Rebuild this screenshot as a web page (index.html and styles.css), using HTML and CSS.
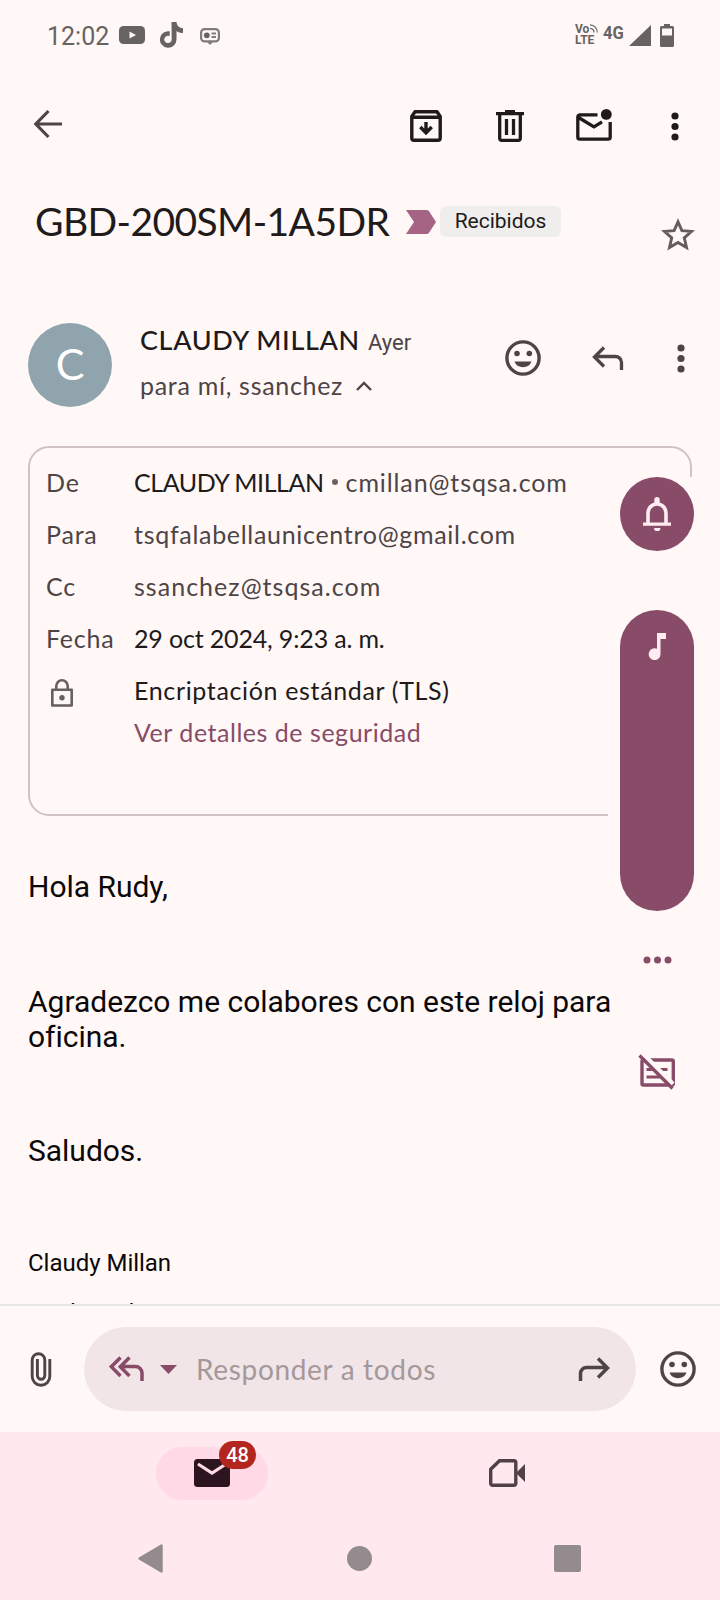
FILE: index.html
```
<!DOCTYPE html>
<html lang="es">
<head>
<meta charset="utf-8">
<title>GBD-200SM-1A5DR</title>
<link rel="stylesheet" href="styles.css">
</head>
<body>
<div class="phone">
  <header class="status">
    <span class="clock">12:02</span>
    <svg class="i-yt" width="26" height="18" viewBox="0 0 26 18"><rect width="26" height="18" rx="4.5" fill="#686363"/><path d="M10.500 5.500v7l6.500-3.500z" fill="#fff8f7"/></svg>
    <svg class="i-tt" width="23" height="26" viewBox="0 0 23 26"><path d="M11.500 0h5c.3 3.600 2.700 6 6.500 6.300v4.600c-2.400 0-4.600-.6-6.500-2V17.500A8.300 8.300 0 1 1 9.700 9.300v4.800a3.700 3.700 0 1 0 2 3.400z" fill="#686363"/></svg>
    <svg class="i-card" width="20" height="17" viewBox="0 0 20 17"><rect x="1.100" y="1.100" width="17.800" height="12.300" rx="3.500" fill="none" stroke="#817c7b" stroke-width="2.200"/><path d="M6.500 13.500h7L10 17z" fill="#817c7b"/><circle cx="6.800" cy="7.300" r="2.900" fill="#686363"/><path d="M11.500 5.500h4.500M11.500 9h4.500" stroke="#817c7b" stroke-width="1.800"/></svg>
    <div class="status-right">
      <div class="volte"><span>Vo<svg width="9" height="9" viewBox="0 0 9 9"><path d="M1 .8a7.500 7.500 0 0 1 7.300 7.700M1 4.300A4.300 4.300 0 0 1 5 8.500" fill="none" stroke="#686363" stroke-width="1.200"/></svg></span><span>LTE</span></div>
      <span class="net">4G</span>
      <svg class="i-sig" width="22" height="21" viewBox="0 0 22 21"><path d="M22 0v21H0z" fill="#686363"/></svg>
      <svg width="14" height="23" viewBox="0 0 14 23"><path fill-rule="evenodd" d="M4 0h6v2h2.500A1.500 1.500 0 0 1 14 3.500v18a1.500 1.500 0 0 1-1.500 1.500h-11A1.500 1.500 0 0 1 0 21.500v-18A1.500 1.500 0 0 1 1.500 2H4zM2 4.500V11.500h10V4.500z" fill="#686363"/></svg>
    </div>
  </header>

  <nav class="appbar">
    <svg width="30" height="30" viewBox="0 0 30 30"><path d="M29 15H3M15.500 2 2.800 15l12.700 13" fill="none" stroke="#4d4446" stroke-width="3.200"/></svg>
    <div class="actions">
      <svg width="32" height="32" viewBox="0 0 32 32" fill="none" stroke="#201a1b" stroke-width="3.400"><path stroke-linejoin="round" d="M1.800 6.500 5 1.800h22l3.200 4.700V28a2.200 2.200 0 0 1-2.200 2.200H4A2.200 2.200 0 0 1 1.800 28z"/><path d="M3 7.200h26M16 12v10.500M10.300 17l5.700 5.800 5.700-5.800"/></svg>
      <svg width="28" height="32" viewBox="0 0 28 32" fill="none" stroke="#201a1b" stroke-width="3.300"><path d="M0 3.700h28M9 1.600h10M3.700 4v24.500a1.800 1.800 0 0 0 1.800 1.800h17a1.800 1.800 0 0 0 1.800-1.800V4M10.500 9v16M17.500 9v16"/></svg>
      <svg width="36" height="32" viewBox="0 0 36 32"><path d="M21.500 5.800H4A2.200 2.200 0 0 0 1.800 8v20A2.200 2.200 0 0 0 4 30.200h28a2.200 2.200 0 0 0 2.200-2.200V13M2.500 8.500 18 17.800l8-5" fill="none" stroke="#201a1b" stroke-width="3.300"/><circle cx="30.300" cy="5.400" r="5.400" fill="#201a1b"/></svg>
      <svg width="8" height="29" viewBox="0 0 8 29" fill="#201a1b"><circle cx="4" cy="4" r="3.600"/><circle cx="4" cy="14.500" r="3.600"/><circle cx="4" cy="25" r="3.600"/></svg>
    </div>
  </nav>

  <section class="subject">
    <h1>GBD-200SM-1A5DR</h1>
    <svg class="tag" width="30" height="24" viewBox="0 0 30 24"><path d="M0 0h20.500q1.500 0 2.500 1.300L30 12l-7 10.700q-1 1.300-2.500 1.300H0l8-12z" fill="#a56484"/></svg>
    <span class="chip">Recibidos</span>
    <svg class="star" width="34" height="33" viewBox="0 0 34 33"><path d="M17 3.800 20.900 12.600l9.700.8-7.300 6.400 2.200 9.700L17 24.400l-8.500 5.100 2.200-9.700-7.300-6.400 9.700-.8z" fill="none" stroke="#645b5d" stroke-width="2.900"/></svg>
  </section>

  <section class="sender">
    <div class="avatar">C</div>
    <div class="who">
      <div class="who-top"><span class="name">CLAUDY MILLAN</span><span class="when">Ayer</span></div>
      <div class="who-sub"><span>para mí, ssanchez</span><svg width="16" height="10" viewBox="0 0 16 10"><path d="M1 9l7-7 7 7" fill="none" stroke="#4d4446" stroke-width="2.400"/></svg></div>
    </div>
    <div class="sender-actions">
      <svg width="36" height="36" viewBox="0 0 36 36"><circle cx="18" cy="18" r="16.100" fill="none" stroke="#4d4446" stroke-width="3.400"/><circle cx="12" cy="13.500" r="2.800" fill="#4d4446"/><circle cx="24.300" cy="13.500" r="2.800" fill="#4d4446"/><path d="M9.500 21.500h17c-1.300 3.600-4.500 5.700-8.500 5.700s-7.200-2.100-8.500-5.700z" fill="#4d4446"/></svg>
      <svg width="32" height="25" viewBox="0 0 32 25"><path d="M12 1.500 2.500 11l9.500 9.500M2.500 10.500H23.500a6 6 0 0 1 6 6V24" fill="none" stroke="#4d4446" stroke-width="3.300"/></svg>
      <svg width="8" height="29" viewBox="0 0 8 29" fill="#4d4446"><circle cx="4" cy="4" r="3.600"/><circle cx="4" cy="14.500" r="3.600"/><circle cx="4" cy="25" r="3.600"/></svg>
    </div>
  </section>

  <dl class="details">
    <dt>De</dt><dd><span class="strong w-name">CLAUDY MILLAN</span><span class="dot"></span><span class="w-mail">cmillan@tsqsa.com</span></dd>
    <dt>Para</dt><dd><span class="w-to">tsqfalabellaunicentro@gmail.com</span></dd>
    <dt>Cc</dt><dd><span class="w-cc">ssanchez@tsqsa.com</span></dd>
    <dt>Fecha</dt><dd class="strong"><span class="w-date">29 oct 2024, 9:23 a. m.</span></dd>
    <dt class="lock"><svg width="22" height="28" viewBox="0 0 22 28"><path d="M1.300 10.800h19.400v15.700H1.300zM5.300 10.500V7a5.700 5.700 0 0 1 11.400 0v3.500" fill="none" stroke="#66605f" stroke-width="2.600" stroke-linejoin="round"/><circle cx="11" cy="18.800" r="2.700" fill="#66605f"/></svg></dt><dd class="strong"><span class="w-enc">Encriptación estándar (TLS)</span></dd>
    <dt></dt><dd class="link"><span class="w-link">Ver detalles de seguridad</span></dd>
  </dl>

  <main class="message">
    <p>Hola Rudy,</p>
    <p class="m2">Agradezco me colabores con este reloj para oficina.</p>
    <p class="m3">Saludos.</p>
    <p class="m4">Claudy Millan</p>
    <p class="m5">Analista de</p>
  </main>

  <footer class="reply">
    <svg width="22" height="36" viewBox="0 0 22 36"><path d="M19.800 8v17.500a8.800 8.800 0 0 1-17.600 0V9a6.300 6.300 0 0 1 12.600 0v15.500a3.700 3.700 0 0 1-7.400 0V8" fill="none" stroke="#4d4446" stroke-width="2.900"/></svg>
    <div class="field">
      <svg width="36" height="26" viewBox="0 0 36 26"><path d="M11.500 1.500 2.300 10.700l9.200 9.200M20.500 1.500l-9.200 9.200 9.200 9.200M11.500 10.500H26.500a6.500 6.500 0 0 1 6.500 6.500v8" fill="none" stroke="#884b68" stroke-width="3.500"/></svg>
      <svg class="caret" width="17" height="9" viewBox="0 0 17 9"><path d="M0 0h17L8.500 9z" fill="#884b68"/></svg>
      <span class="hint">Responder a todos</span>
      <svg class="fwd" width="32" height="25" viewBox="0 0 32 25"><path d="M20 1.500l9.500 9.500-9.500 9.500M29.500 10.500H8.500a6 6 0 0 0-6 6V24" fill="none" stroke="#4d4446" stroke-width="3.500"/></svg>
    </div>
    <svg class="smile" width="36" height="36" viewBox="0 0 36 36"><circle cx="18" cy="18" r="16.100" fill="none" stroke="#4d4446" stroke-width="3.400"/><circle cx="12" cy="13.500" r="2.800" fill="#4d4446"/><circle cx="24.300" cy="13.500" r="2.800" fill="#4d4446"/><path d="M9.500 21.500h17c-1.300 3.600-4.500 5.700-8.500 5.700s-7.200-2.100-8.500-5.700z" fill="#4d4446"/></svg>
  </footer>

  <nav class="bottom">
    <div class="tabs">
      <div class="tab active">
        <svg width="36" height="28" viewBox="0 0 36 28"><rect width="36" height="28" rx="3.500" fill="#2d151f"/><path d="M4 5l14 9 14-9" fill="none" stroke="#ffd9e5" stroke-width="3.200"/></svg>
        <span class="badge">48</span>
      </div>
      <div class="tab"><svg width="36" height="28" viewBox="0 0 36 28"><path d="M10.500 1.700H25a1.800 1.800 0 0 1 1.800 1.800v21a1.800 1.800 0 0 1-1.800 1.800H3.500a1.800 1.800 0 0 1-1.800-1.800V10.200z" fill="none" stroke="#514047" stroke-width="3.400"/><path d="M27 14l9-9v18z" fill="#514047"/></svg></div>
    </div>
    <div class="system">
      <svg width="25" height="29" viewBox="0 0 25 29"><path d="M23.500 1.500v26L1.500 14.500z" fill="#938b8d" stroke="#938b8d" stroke-width="2.400" stroke-linejoin="round"/></svg>
      <svg class="home" width="25" height="25" viewBox="0 0 25 25"><circle cx="12.500" cy="12.500" r="12.500" fill="#938b8d"/></svg>
      <svg width="27" height="27" viewBox="0 0 27 27"><rect width="27" height="27" rx="2" fill="#938b8d"/></svg>
    </div>
  </nav>

  <aside class="volume">
    <div class="ring"><svg width="28" height="34" viewBox="0 0 28 34"><path d="M5 27V16a9 9 0 0 1 18 0v11" fill="none" stroke="#ffecf1" stroke-width="3.600"/><path d="M0 25.500h28v3.300H0zM11 31h6.500a3.200 3.200 0 0 1-6.500 0zM11.300 6V2.700a2.700 2.700 0 0 1 5.400 0V6z" fill="#ffecf1"/></svg></div>
    <div class="slider"><svg width="18" height="27" viewBox="0 0 18 27"><path d="M9 0h9v6h-5.500v15A5.900 5.900 0 1 1 9 15.800z" fill="#ffecf1"/></svg></div>
    <svg class="more" width="29" height="8" viewBox="0 0 29 8" fill="#884b68"><circle cx="4" cy="4" r="3.500"/><circle cx="14.500" cy="4" r="3.500"/><circle cx="25" cy="4" r="3.500"/></svg>
    <svg class="caption" width="38" height="37" viewBox="0 0 38 37"><rect x="4" y="6" width="31.300" height="25" rx="1.500" fill="none" stroke="#884b68" stroke-width="3.400"/><path d="M8.500 15.500h7M21.500 15.500h8M8.500 23h15M27.500 22h1.500" stroke="#884b68" stroke-width="3"/><path d="M6 1l29 29" stroke="#fff8f7" stroke-width="4.500"/><path d="M1.500 1.500l33 33" stroke="#884b68" stroke-width="3.400"/></svg>
  </aside>
</div>
</body>
</html>
```

FILE: styles.css
```
* { box-sizing: border-box; margin: 0; padding: 0; }
body { background: #fff8f7; }
svg { display: block; flex: none; }
.phone { position: relative; width: 720px; height: 1600px; overflow: hidden; background: #fff8f7; font-family: Lato, "Open Sans", sans-serif; color: #201a1b; display: flex; flex-direction: column; white-space: nowrap; }

.status { height: 72px; flex: none; display: flex; align-items: center; padding: 0 46px 2px 47px; font-family: Roboto, sans-serif; color: #686363; }
.clock { font-size: 25px; width: 72px; line-height: 30px; padding-top: 4px; }
.i-tt { margin-left: 15px; }
.i-card { margin-left: 17px; margin-top: 2px; }
.status-right { margin-left: auto; display: flex; align-items: center; }
.volte { width: 24px; margin-right: 4px; display: flex; flex-direction: column; font-size: 12px; font-weight: 700; line-height: 11px; }
.volte span { display: flex; height: 11px; }
.net { font-size: 18px; font-weight: 700; width: 26px; transform: scaleX(.92); transform-origin: left; padding-bottom: 5px; }
.i-sig { margin-right: 9px; }

.appbar { height: 108px; flex: none; display: flex; align-items: center; padding: 0 41px 0 33px; }
.appbar > svg { margin-top: -4px; }
.actions { margin-left: auto; display: flex; align-items: center; }
.actions svg:nth-child(2) { margin-left: 54px; }
.actions svg:nth-child(3) { margin-left: 52px; margin-top: -2px; }
.actions svg:nth-child(4) { margin-left: 59px; }

.subject { height: 143px; flex: none; display: flex; align-items: flex-start; padding: 0 25px 0 35px; }
.subject h1 { font-size: 39px; font-weight: 400; line-height: 48px; letter-spacing: -.6px; width: 371px; padding-top: 17px; }
.tag { margin-top: 30px; }
.chip { margin: 26px 0 0 4px; width: 121px; height: 31px; border-radius: 6px; background: #efeeed; font: 21px/30px Roboto, sans-serif; text-align: center; }
.star { margin: 38px 0 0 auto; }

.sender { height: 123px; flex: none; display: flex; align-items: flex-start; padding: 0 34px 0 28px; }
.avatar { width: 84px; height: 84px; border-radius: 50%; background: #90a4ad; color: #fff; font-size: 43px; line-height: 82px; text-align: center; }
.who { margin-left: 28px; }
.who-top { display: flex; align-items: baseline; line-height: 34px; }
.name { font-size: 27px; font-weight: 500; letter-spacing: .62px; width: 228px; }
.when { font: 22px Roboto, sans-serif; color: #4d4446; }
.who-sub { display: flex; align-items: center; font-size: 25px; line-height: 30px; letter-spacing: .7px; margin-top: 13px; color: #4d4446; }
.who-sub span { width: 216px; }
.who-sub svg { margin-top: 2px; }
.sender-actions { display: flex; align-items: center; margin: 17px 1px 0 auto; }
.sender-actions svg:nth-child(2) { margin-left: 51px; }
.sender-actions svg:nth-child(3) { margin-left: 53px; }

.details { width: 664px; height: 370px; flex: none; margin-left: 28px; border: 2px solid #d1c2c5; border-radius: 21px; padding: 8px 0 0 16px; display: grid; grid-template-columns: 88px 1fr; grid-template-rows: repeat(5, 52px) 34px; align-content: start; font-size: 25px; line-height: 52px; color: #4d4446; }
.details dt { letter-spacing: .8px; }
.details dd { display: flex; align-items: baseline; }
.details dd:last-child { line-height: 32px; }
.details .strong { color: #201a1b; }
.details .link { color: #884b68; }
.w-name { letter-spacing: -.45px; }
.w-mail { letter-spacing: .9px; }
.w-to { letter-spacing: .7px; }
.w-cc { letter-spacing: 1.03px; }
.w-date { letter-spacing: -.16px; }
.w-enc { letter-spacing: .65px; }
.w-link { letter-spacing: .53px; }
.dot { width: 6px; height: 6px; border-radius: 50%; background: #6b6264; margin: 0 8px; align-self: center; }
.lock svg { margin: 15px 0 0 5px; }

.message { height: 488px; flex: none; overflow: hidden; padding: 53px 0 0 28px; font: 30px/35px Roboto, sans-serif; letter-spacing: -.02px; color: #0c0708; }
.m2 { margin-top: 80px; width: 600px; white-space: normal; }
.m3 { margin-top: 79px; }
.m4 { margin-top: 79px; font-size: 24px; line-height: 32px; }
.m5 { margin-top: 18px; font-size: 24px; line-height: 32px; }

.reply { height: 128px; flex: none; border-top: 2px solid #e8e5e7; display: flex; align-items: center; padding: 0 24px 0 30px; }
.field { width: 552px; height: 84px; margin-left: 32px; border-radius: 42px; background: #f1e5e7; display: flex; align-items: center; padding: 0 26px 0 25px; }
.caret { margin-left: 15px; }
.hint { margin-left: 19px; font-size: 28px; line-height: 40px; letter-spacing: .67px; color: #a4989b; }
.fwd { margin-left: auto; }
.smile { margin-left: auto; }

.bottom { height: 168px; flex: none; background: #ffe8ee; }
.tabs { display: flex; padding: 15px 156px; justify-content: space-between; height: 84px; }
.tab { position: relative; width: 112px; height: 53px; border-radius: 27px; display: flex; align-items: center; justify-content: center; padding-bottom: 2px; }
.tab:last-child { margin-right: 1px; }
.active { background: #ffd9e5; }
.badge { position: absolute; left: 63px; top: -6px; width: 37px; height: 28px; border-radius: 14px; background: #b3261e; color: #fff; font: 500 20px/28px Roboto, sans-serif; text-align: center; }
.system { display: flex; align-items: center; justify-content: space-between; height: 84px; padding: 1px 139px 0 138px; }
.home { margin-left: 2px; }

/* System volume panel shown over the message */
.volume { position: absolute; left: 608px; top: 477px; width: 98px; height: 460px; background: #fff8f7; display: flex; flex-direction: column; align-items: center; }
.volume > * { flex: none; }
.ring { width: 74px; height: 74px; border-radius: 50%; background: #884b68; display: flex; align-items: center; justify-content: center; }
.slider { width: 74px; height: 301px; margin-top: 59px; border-radius: 37px; background: #884b68; display: flex; justify-content: center; padding-top: 23px; }
.more { margin-top: 45px; }
.caption { margin-top: 90px; margin-right: 1px; }
```
